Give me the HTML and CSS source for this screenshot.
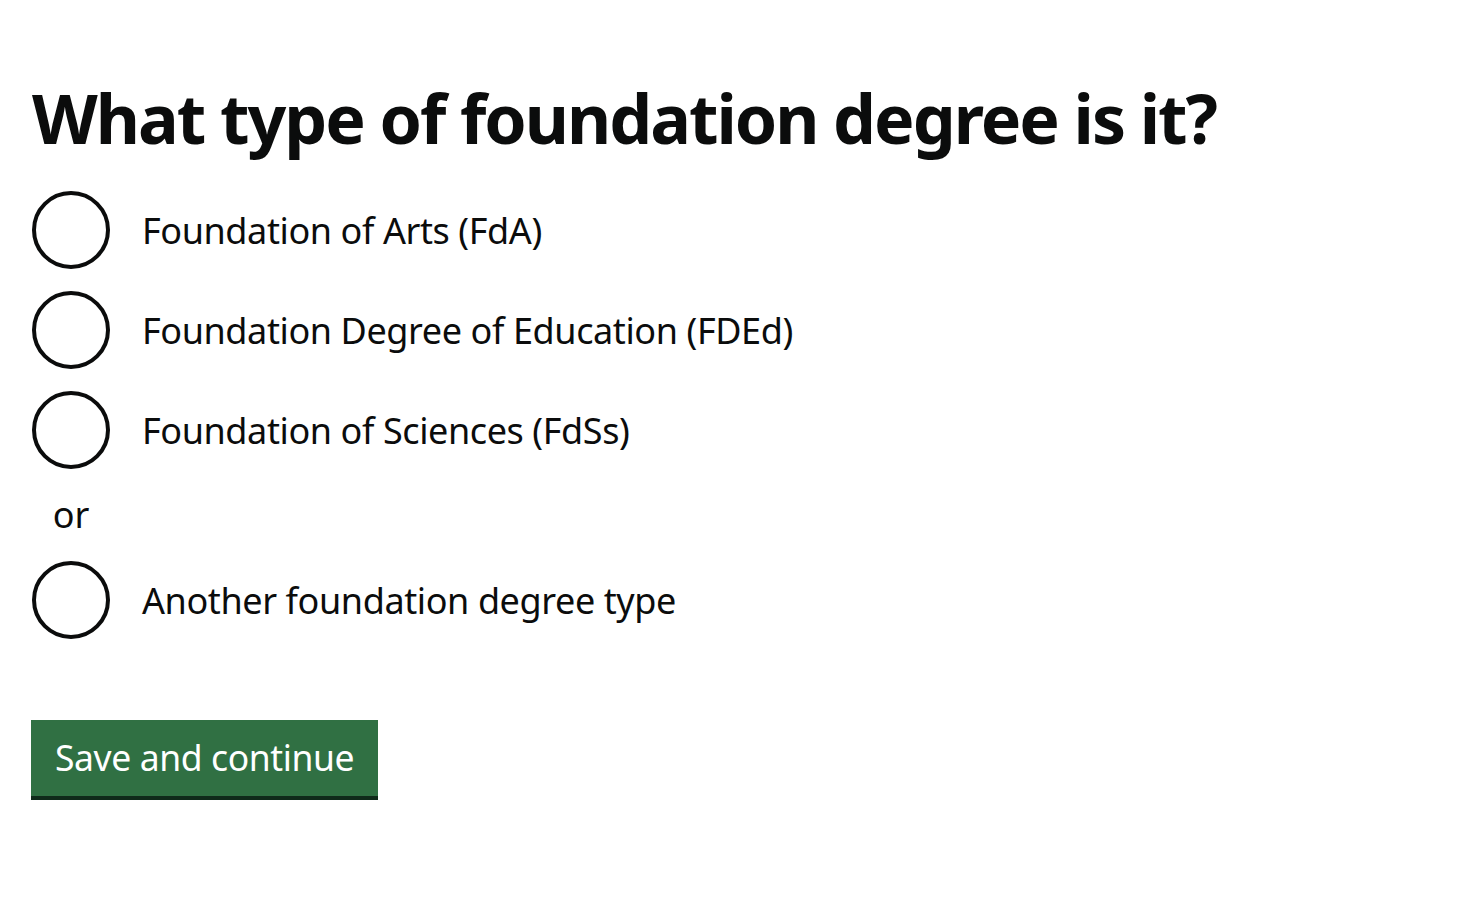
FILE: index.html
```html
<!DOCTYPE html>
<html lang="en">
<head>
<meta charset="utf-8">
<title>What type of foundation degree is it?</title>
<link rel="stylesheet" href="styles.css">
</head>
<body>
<main class="page">
  <form class="form">
    <fieldset class="fieldset">
      <legend class="legend"><h1 class="heading">What type of foundation degree is it?</h1></legend>
      <div class="radios">
        <label class="radio"><span class="radio-input"></span><span class="radio-label">Foundation of Arts (FdA)</span></label>
        <label class="radio"><span class="radio-input"></span><span class="radio-label">Foundation Degree of Education (FDEd)</span></label>
        <label class="radio"><span class="radio-input"></span><span class="radio-label">Foundation of Sciences (FdSs)</span></label>
        <div class="divider">or</div>
        <label class="radio"><span class="radio-input"></span><span class="radio-label">Another foundation degree type</span></label>
      </div>
    </fieldset>
    <button type="button" class="button">Save and continue</button>
  </form>
</main>
</body>
</html>
```
FILE: styles.css
```css
* { box-sizing: border-box; }
html, body { margin: 0; padding: 0; background: #fff; }
body {
  font-family: "Noto Sans", "Liberation Sans", sans-serif;
  color: #0b0c0c;
}
.page { padding: 78px 32px 0 32px; }
.form { display: flex; flex-direction: column; align-items: flex-start; }
.fieldset { border: 0; margin: 0; padding: 0; min-width: 0; }
.legend { padding: 0; }
.heading {
  margin: 0 0 33px 0;
  font-size: 68px;
  line-height: 80px;
  font-weight: 700;
  letter-spacing: -2px;
}
.radios { display: flex; flex-direction: column; gap: 22px; }
.radio { display: flex; align-items: center; gap: 32px; height: 78px; }
.radio-input {
  width: 78px; height: 78px;
  border: 4px solid #0b0c0c;
  border-radius: 50%;
  flex: none;
}
.radio-label { font-size: 36px; line-height: 50px; letter-spacing: -0.4px; padding-top: 2px; }
.divider {
  width: 78px; text-align: center;
  font-size: 36px; line-height: 40px;
  margin: 4px 0 4px 0;
}
.button {
  margin-top: 81px;
  margin-left: -1px;
  background: #307043;
  color: #fff;
  border: 0;
  border-bottom: 4px solid #0f2a1a;
  font-family: inherit;
  font-size: 35.5px;
  line-height: 40px;
  padding: 16px 24px 18px 24px;
  height: 80px;
  letter-spacing: -0.4px;
  border-radius: 0;
}
```
